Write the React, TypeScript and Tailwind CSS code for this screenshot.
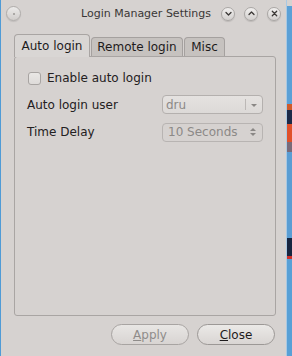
import React from "react";

const font = { fontFamily: '"DejaVu Sans", "Liberation Sans", sans-serif' };

function TitleBtn({ kind }: { kind: "down" | "up" | "close" }) {
  return (
    <div className="w-[14px] h-[14px] rounded-full border border-[#aaa7a5] bg-gradient-to-b from-[#f1efee] to-[#d3d0ce] flex items-center justify-center shadow-[0_1px_1px_rgba(0,0,0,0.12)]">
      <svg width="9" height="9" viewBox="0 0 9 9">
        {kind === "down" && (
          <path d="M2 3.5 L4.5 6 L7 3.5" fill="none" stroke="#3b3836" strokeWidth="1.3" strokeLinecap="round" strokeLinejoin="round" />
        )}
        {kind === "up" && (
          <path d="M2 5.5 L4.5 3 L7 5.5" fill="none" stroke="#3b3836" strokeWidth="1.3" strokeLinecap="round" strokeLinejoin="round" />
        )}
        {kind === "close" && (
          <path d="M2.3 2.3 L6.7 6.7 M6.7 2.3 L2.3 6.7" fill="none" stroke="#3b3836" strokeWidth="1.3" strokeLinecap="round" />
        )}
      </svg>
    </div>
  );
}

export default function App() {
  return (
    <div className="w-[292px] h-[356px] flex overflow-hidden text-[#232021]" style={font}>
      <div className="w-[287px] h-[356px] bg-[#d6d2d0] border-l border-[#4f9bd6] flex flex-col relative">
        {/* title bar */}
        <div className="h-[27px] flex items-center shrink-0">
          <div className="ml-[5px] w-[15px] h-[15px] rounded-full border border-[#b0adab] bg-gradient-to-b from-[#ecebea] to-[#d0cdcb] flex items-center justify-center shadow-[0_1px_1px_rgba(0,0,0,0.1)]">
            <div className="w-[2px] h-[2px] rounded-full bg-[#9a9795]" />
          </div>
          <div className="ml-[60px] text-[11px] leading-none text-[#3a3736] whitespace-nowrap">Login Manager Settings</div>
          <div className="ml-[10px] flex items-center gap-[9px]">
            <TitleBtn kind="down" />
            <TitleBtn kind="up" />
            <TitleBtn kind="close" />
          </div>
        </div>
        {/* tabs */}
        <div className="mt-[7px] pl-[13px] h-[22px] flex items-end shrink-0 relative z-10">
          <div className="w-[76px] h-[23px] -mb-[1px] rounded-t-[4px] border border-b-0 border-[#a9a5a3] bg-[#d9d6d4] flex items-center justify-center text-[12px] text-[#1e1b1c]">
            Auto login
          </div>
          <div className="ml-[1px] w-[92px] h-[19px] rounded-t-[4px] border border-b-0 border-[#a5a19f] bg-[#c6c2bf] flex items-center justify-center text-[12px] text-[#1e1b1c]">
            Remote login
          </div>
          <div className="ml-[1px] w-[41px] h-[19px] rounded-t-[4px] border border-b-0 border-[#a5a19f] bg-[#c6c2bf] flex items-center justify-center text-[12px] text-[#1e1b1c]">
            Misc
          </div>
        </div>
        {/* panel */}
        <div className="ml-[13px] w-[262px] h-[260px] border border-[#a9a5a3] rounded-[3px] bg-[#d6d2d0] shrink-0 flex flex-col px-[12px] text-[12px]">
          <div className="mt-[11px] h-[20px] flex items-center">
            <div className="ml-[1px] w-[13px] h-[13px] rounded-[3px] border border-[#a8a4a2] bg-gradient-to-b from-[#e9e7e5] to-[#dedbd9]" />
            <span className="ml-[6px]">Enable auto login</span>
          </div>
          <div className="mt-[7px] h-[19px] flex items-center justify-between">
            <span>Auto login user</span>
            <div className="w-[101px] h-[19px] rounded-[4px] border border-[#b4b0ae] bg-gradient-to-b from-[#e5e2e0] to-[#dcd9d7] flex items-center">
              <span className="ml-[3px] flex-1 text-[#8c8987]">dru</span>
              <div className="w-px h-[11px] bg-[#bcb8b6]" />
              <svg width="16" height="10" viewBox="0 0 16 10">
                <path d="M5 4 L8 7 L11 4 Z" fill="#8a8785" />
              </svg>
            </div>
          </div>
          <div className="mt-[9px] h-[18px] flex items-center justify-between">
            <span>Time Delay</span>
            <div className="w-[101px] h-[19px] rounded-[4px] border border-[#b8b4b2] bg-[#d6d2d0] flex items-center">
              <span className="ml-[5px] flex-1 text-[#8c8987]">10 Seconds</span>
              <svg width="14" height="14" viewBox="0 0 14 14" className="mr-[2px]">
                <path d="M4 6 L7 3 L10 6 Z" fill="#8a8785" />
                <path d="M4 8 L7 11 L10 8 Z" fill="#8a8785" />
              </svg>
            </div>
          </div>
        </div>
        {/* buttons */}
        <div className="mt-[8px] pr-[12px] flex justify-end gap-[8px] text-[12px]">
          <div className="w-[78px] h-[21px] rounded-full border border-[#a8a4a2] bg-gradient-to-b from-[#e8e6e4] to-[#d8d4d2] flex items-center justify-center text-[#8f8c8a]">
            <span><span className="underline">A</span>pply</span>
          </div>
          <div className="w-[78px] h-[21px] rounded-full border border-[#9c9896] bg-gradient-to-b from-[#ebe9e7] to-[#d9d5d3] flex items-center justify-center text-[#1e1b1c]">
            <span><span className="underline">C</span>lose</span>
          </div>
        </div>
        <div className="absolute right-0 top-0 bottom-0 w-px bg-[#a9c9e3]" />
      </div>
      {/* desktop strip */}
      <div className="w-[5px] h-[356px] flex flex-col">
        <div className="h-[6px] bg-[#d6d2d0]" />
        <div className="h-[98px] bg-[#5ba0d6]" />
        <div className="h-[6px] bg-[#d05a2a]" />
        <div className="h-[14px] bg-[#1c2a48]" />
        <div className="h-[18px] bg-[#e0502a]" />
        <div className="h-[10px] bg-[#7a6a78]" />
        <div className="h-[86px] bg-[#5a9dd3]" />
        <div className="h-[18px] bg-[#172540]" />
        <div className="h-[3px] bg-[#d0302a]" />
        <div className="flex-1 bg-[#58a0d6]" />
      </div>
    </div>
  );
}
